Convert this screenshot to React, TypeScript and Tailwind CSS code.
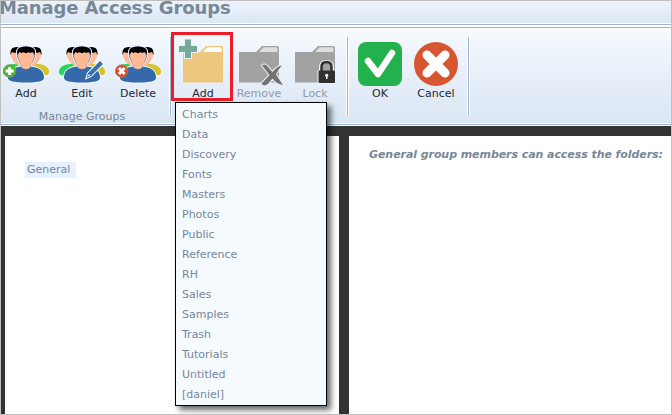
import type { ReactNode } from 'react';

const folders = ['Charts', 'Data', 'Discovery', 'Fonts', 'Masters', 'Photos', 'Public', 'Reference', 'RH', 'Sales', 'Samples', 'Trash', 'Tutorials', 'Untitled', '[daniel]'];

function Icon({ children }: { children: ReactNode }) {
  return <svg width="56" height="49" viewBox="0 0 56 49" className="block shrink-0">{children}</svg>;
}

function People({ children }: { children?: ReactNode }) {
  return (
    <Icon>
      <path d="M5 35C5 30 9 27.500 19 26.500L24 38H8Q5 38 5 35Z" fill="#2bd45c" />
      <path d="M51 35C51 30 47 27.500 37 26.500L32 38H48Q51 38 51 35Z" fill="#d6c422" />
      <path d="M13 15H24V29H20L17.500 26Q14.500 24 13.800 21Q12.500 20 13 18Z" fill="#ffba93" />
      <path d="M43 15H32V29H36L38.500 26Q41.500 24 42.200 21Q43.500 20 43 18Z" fill="#ffba93" />
      <path d="M12.500 18Q12 13 14.500 11Q17 9.500 23 10V16L19 15L17 16L14 15Z" />
      <path d="M43.500 18Q44 13 41.500 11Q39 9.500 33 10V16L37 15L39 16L42 15Z" />
      <path d="M10 41C10 34 14 30.500 23.500 29.500V27.500Q20.500 25 20 21.500Q18.500 20 19 14Q20 9.500 28 9.500Q36 9.500 37 14Q37.500 20 36 21.500Q35.500 25 32.500 27.500V29.500C42 30.500 46 34 46 41Q46 45.500 28 45.500Q10 45.500 10 41Z" fill="#3469aa" stroke="#eef4fb" strokeWidth="2" paintOrder="stroke" />
      <path d="M20 15H36Q37 19.500 35.500 21.500Q34.800 25 32.500 27.500V30.500Q28 34 23.500 30.500V27.500Q21.200 25 20.500 21.500Q19 19.500 20 15Z" fill="#ffba93" />
      <path d="M19.500 18Q18.500 13 21 11Q24 9.500 28 9.500Q32 9.500 35 11Q37.500 13 36.500 18L34.500 15L32.500 16L30.500 15.200L28 16.200L25.500 15.200L23.500 16L21.500 15Z" />
      {children}
    </Icon>
  );
}

function Folder({ fill, flap, children }: { fill: string; flap: string; children?: ReactNode }) {
  return (
    <Icon>
      <path d="M8 45.500V16Q8 15 9 15H25L31 9H46.500Q48 9 48 10.500V45.500Z" fill={fill} />
      <path d="M28 15L32.500 10.300H45.500Q46.500 10.300 46.500 12V15Z" fill={flap} />
      {children}
    </Icon>
  );
}

function Tool({ label, disabled, children }: { label: string; disabled?: boolean; children: ReactNode }) {
  return (
    <div className="flex w-14 flex-col items-center">
      {children}
      <span className={`mt-px text-[11px] leading-[14px] ${disabled ? 'text-[#929aa5]' : 'text-[#222a33]'}`}>{label}</span>
    </div>
  );
}

function Divider() {
  return <div className="flex w-[9px] shrink-0 justify-center"><div className="h-[79px] w-[3px] border-x border-white bg-[#9eb4d3]" /></div>;
}

export default function App() {
  return (
    <div className="relative flex h-[415px] w-[672px] flex-col overflow-hidden border border-[#c0c0c0] bg-white font-['DejaVu_Sans',sans-serif] text-[#778797]">
      <header className="h-[22px] shrink-0 bg-linear-to-b from-[#edf2fb] to-[#dbe7f4]">
        <h1 className="-ml-[2px] -mt-[2px] whitespace-nowrap text-[18px] font-bold leading-[18px] tracking-[-0.12px]">Manage Access Groups</h1>
      </header>
      <div className="h-[5px] shrink-0 border-b border-[#a0b4cb] bg-white pt-px"><div className="h-px bg-[#a0b4cb]" /></div>
      <div className="h-[95px] shrink-0 border-t border-white bg-linear-to-b from-[#f6fafd] via-[#eaf1fa] via-40% to-[#dae6f4] pt-[8px]">
        <div className="-ml-[3px] flex">
          <div className="flex flex-col">
            <div className="flex">
              <Tool label="Add"><People><circle cx="11.700" cy="34" r="6.300" fill="#45bb32" stroke="#93836d" strokeWidth=".8" /><path d="M11.700 30V38M7.700 34H15.700" stroke="white" strokeWidth="3" /></People></Tool>
              <Tool label="Edit"><People><path d="M32.500 41L34 36L46 24L49 27L37 39Z" fill="#3971b0" stroke="white" strokeWidth="2" paintOrder="stroke" /><path d="M33.500 39.500L35 37L36 38.500Z" fill="white" /></People></Tool>
              <Tool label="Delete"><People><circle cx="11.700" cy="34" r="6.300" fill="#d9502f" stroke="#b87e70" strokeWidth=".7" /><path d="M9 31L14.500 37M14.500 31L9 37" stroke="white" strokeWidth="2.800" /></People></Tool>
            </div>
            <span className="mt-[9px] text-center text-[11px] leading-[14px]">Manage Groups</span>
          </div>
          <Divider />
          <div className="flex">
            <Tool label="Add"><Folder fill="#eec77e" flap="white"><path d="M9 1.500H17V8H23V16H17V22H9V16H3V8H9Z" fill="#eff5fc" /><path d="M10 2.500H16V9H22V15H16V21H10V15H4V9H10Z" fill="#75aa9a" /></Folder></Tool>
            <Tool label="Remove" disabled><Folder fill="#a2a2a2" flap="#dedede"><path d="M31 28.500Q34 26 37 30L41.500 35Q45 30 51 28Q47 33 45 37.500L52 48Q45.500 47 41.500 41.500L37 47Q32.500 50 30.500 46.500L38.500 38Z" fill="#737373" stroke="#f0f3f7" strokeWidth="2" paintOrder="stroke" /></Folder></Tool>
            <Tool label="Lock" disabled><Folder fill="#a2a2a2" flap="#dedede"><path d="M30.500 47V33.500H32V30Q32 23 39.500 23Q47 23 47 30V33.500H48.500V47Z" fill="#edf2f8" /><path d="M34.500 35V30Q34.500 25 39.500 25Q44.500 25 44.500 30V35" fill="#a2a2a2" stroke="#303030" strokeWidth="2.500" /><rect x="31.500" y="33.500" width="16.500" height="12.500" rx="1" fill="#303030" /><circle cx="39.700" cy="38.300" r="1.500" fill="white" /><path d="M39.700 38V42" stroke="white" strokeWidth="1.500" /></Folder></Tool>
          </div>
          <Divider />
          <div className="flex">
            <Tool label="OK"><Icon><rect x="6" y="5" width="44" height="44" rx="8" fill="#23b14d" /><path d="M16 24L26 37L40 16" fill="none" stroke="white" strokeWidth="6.500" strokeLinecap="round" strokeLinejoin="round" /></Icon></Tool>
            <Tool label="Cancel"><Icon><circle cx="28" cy="27" r="22" fill="#d75531" /><path d="M19 18L37 36M37 18L19 36" stroke="white" strokeWidth="9" strokeLinecap="round" /></Icon></Tool>
          </div>
          <Divider />
        </div>
      </div>
      <div className="h-[3px] shrink-0 border-y border-white bg-[#9eb4d9]" />
      <main className="flex min-h-0 flex-1 gap-[10px] bg-[#333] pl-1 pt-[10px]">
        <section className="w-[334px] shrink-0 bg-white pl-5 pt-[26px]">
          <div className="h-4 w-[51px] bg-[#e5f1ff] pl-[2px] text-[11px] leading-[15px]">General</div>
        </section>
        <section className="min-w-0 flex-1 bg-white pl-5 pt-[12px]">
          <p className="whitespace-nowrap text-[11px] font-bold italic leading-[14px] tracking-[-0.065px]">General group members can access the folders:</p>
        </section>
      </main>
      <div className="absolute left-[170px] top-[31px] h-[69px] w-[62px] border-[3px] border-[#ec1c28]" />
      <ul className="absolute left-[174px] top-[101px] h-[304px] w-[152px] border border-black bg-[#f5faff] pt-[2px] shadow-[4px_4px_6px_rgba(0,0,0,0.6)]">
        {folders.map((name) => <li key={name} className="h-5 pl-[6px] text-[11px] leading-[19px]">{name}</li>)}
      </ul>
    </div>
  );
}
